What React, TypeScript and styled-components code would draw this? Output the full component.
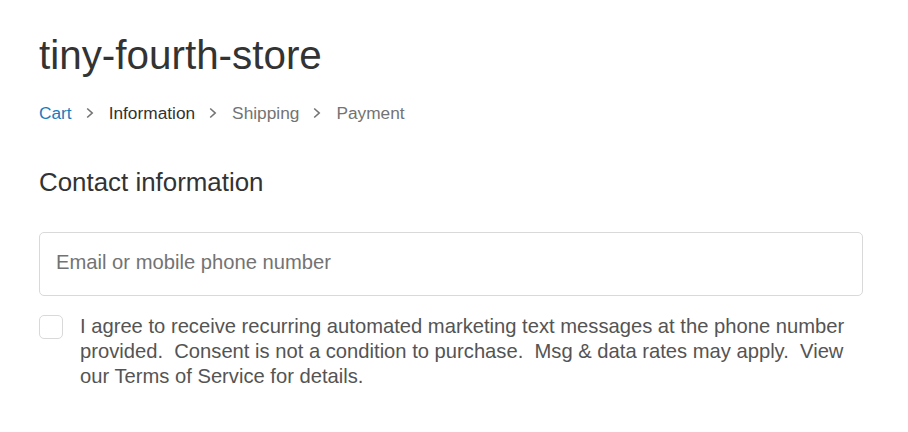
import styled, { createGlobalStyle } from 'styled-components';

const GlobalStyle = createGlobalStyle`
  html, body {
    margin: 0;
    padding: 0;
    background: #ffffff;
  }
  body {
    font-family: "Liberation Sans", Arial, sans-serif;
    color: #333333;
  }
`;

const steps = [
  { label: 'Cart', state: 'link' },
  { label: 'Information', state: 'current' },
  { label: 'Shipping', state: 'pending' },
  { label: 'Payment', state: 'pending' },
] as const;

type StepState = (typeof steps)[number]['state'];

function Chevron() {
  return (
    <ChevronIcon viewBox="0 0 8 12" aria-hidden="true">
      <path d="M1.2 1.5 L6.2 6 L1.2 10.5" fill="none" stroke="currentColor" strokeWidth="1.6" />
    </ChevronIcon>
  );
}

export default function App() {
  return (
    <>
      <GlobalStyle />
      <Page>
        <StoreName>tiny-fourth-store</StoreName>

        <Breadcrumbs>
          {steps.map((step, i) => (
            <Crumb key={step.label}>
              <CrumbLabel $state={step.state}>{step.label}</CrumbLabel>
              {i < steps.length - 1 && <Chevron />}
            </Crumb>
          ))}
        </Breadcrumbs>

        <SectionTitle>Contact information</SectionTitle>

        <Field>
          <Input type="text" placeholder="Email or mobile phone number" />
        </Field>

        <ConsentRow>
          <Checkbox type="checkbox" />
          <ConsentText>
            I agree to receive recurring automated marketing text messages at the phone number
            provided.{'\u00a0 '}Consent is not a condition to purchase.{'\u00a0 '}Msg &amp; data rates may
            apply.{'\u00a0 '}View our Terms of Service for details.
          </ConsentText>
        </ConsentRow>
      </Page>
    </>
  );
}

const Page = styled.main`
  padding: 31px 45px 0 39px;
`;

const StoreName = styled.h1`
  margin: 0;
  font-size: 40.4px;
  line-height: 48px;
  font-weight: 400;
  color: #333333;
`;

const Breadcrumbs = styled.nav`
  display: flex;
  align-items: center;
  margin-top: 22px;
  font-size: 17.3px;
  line-height: 24px;
`;

const Crumb = styled.div`
  display: flex;
  align-items: center;
`;

const crumbColors: Record<StepState, string> = {
  link: '#197bbd',
  current: '#333333',
  pending: '#737373',
};

const CrumbLabel = styled.span<{ $state: StepState }>`
  color: ${(p) => crumbColors[p.$state]};
`;

const ChevronIcon = styled.svg`
  width: 8px;
  height: 12px;
  margin: 0 15px 0 14px;
  color: #737373;
`;

const SectionTitle = styled.h2`
  margin: 41px 0 0;
  font-size: 25.9px;
  line-height: 33px;
  font-weight: 400;
  color: #333333;
`;

const Field = styled.div`
  margin-top: 33px;
`;

const Input = styled.input`
  box-sizing: border-box;
  display: block;
  width: 100%;
  height: 64px;
  padding: 0 16px 3px;
  border: 1px solid #d9d9d9;
  border-radius: 5px;
  font-family: inherit;
  font-size: 20.2px;
  color: #333333;
  background: #ffffff;
  outline: none;

  &::placeholder {
    color: #737373;
  }
`;

const ConsentRow = styled.label`
  display: flex;
  align-items: flex-start;
  gap: 17px;
  margin-top: 19px;
`;

const Checkbox = styled.input`
  appearance: none;
  flex: none;
  box-sizing: border-box;
  width: 24px;
  height: 24px;
  margin: 0;
  border: 1px solid #d9d9d9;
  border-radius: 5px;
  background: #ffffff;
`;

const ConsentText = styled.span`
  margin-top: -1px;
  font-size: 20.2px;
  line-height: 25px;
  color: #545454;
`;
